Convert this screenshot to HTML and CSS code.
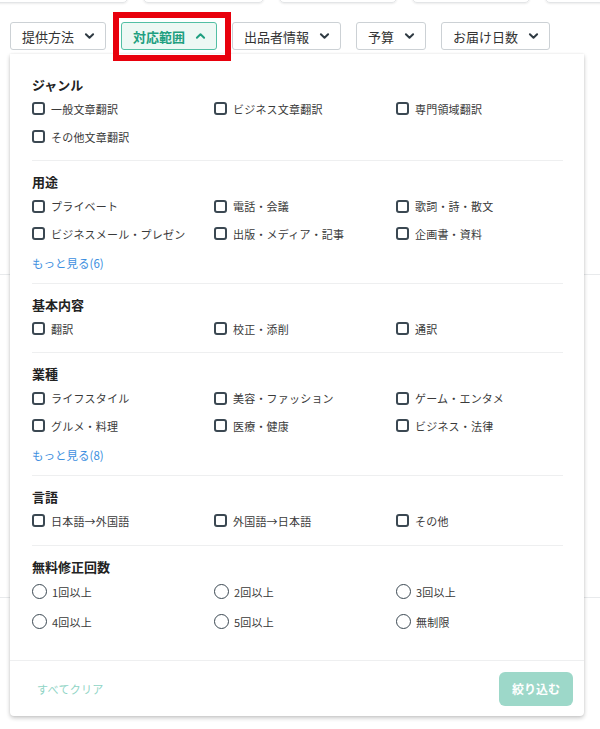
FILE: index.html
```html
<!DOCTYPE html>
<html lang="ja">
<head>
<meta charset="utf-8">
<title>絞り込み</title>
<link rel="stylesheet" href="styles.css">
</head>
<body>
<div class="page">
  <div class="top-cards">
    <div class="tcard w1"></div>
    <div class="tcard w2"></div>
    <div class="tcard w3"></div>
    <div class="tcard w4"></div>
    <div class="tcard w5"></div>
  </div>

  <div class="filter-bar">
    <button class="fbtn"><span>提供方法</span><svg class="chev" viewBox="0 0 10 6"><path d="M1 1l4 4 4-4"/></svg></button>
    <button class="fbtn active"><span>対応範囲</span><svg class="chev" viewBox="0 0 10 6"><path d="M1 5l4-4 4 4"/></svg></button>
    <button class="fbtn"><span>出品者情報</span><svg class="chev" viewBox="0 0 10 6"><path d="M1 1l4 4 4-4"/></svg></button>
    <button class="fbtn"><span>予算</span><svg class="chev" viewBox="0 0 10 6"><path d="M1 1l4 4 4-4"/></svg></button>
    <button class="fbtn"><span>お届け日数</span><svg class="chev" viewBox="0 0 10 6"><path d="M1 1l4 4 4-4"/></svg></button>
  </div>

  <div class="results">
    <div class="result r1"></div>
    <div class="result r2"></div>
    <div class="result r3"><span class="price">¥5,000</span></div>
  </div>

  <div class="highlight"></div>

  <div class="panel">
    <div class="panel-body">
      <section class="sec">
        <h3 class="sec-title">ジャンル</h3>
        <div class="opts">
          <label class="opt"><span class="cb"></span>一般文章翻訳</label>
          <label class="opt"><span class="cb"></span>ビジネス文章翻訳</label>
          <label class="opt"><span class="cb"></span>専門領域翻訳</label>
          <label class="opt"><span class="cb"></span>その他文章翻訳</label>
        </div>
      </section>
      <section class="sec">
        <h3 class="sec-title">用途</h3>
        <div class="opts">
          <label class="opt"><span class="cb"></span>プライベート</label>
          <label class="opt"><span class="cb"></span>電話・会議</label>
          <label class="opt"><span class="cb"></span>歌詞・詩・散文</label>
          <label class="opt"><span class="cb"></span>ビジネスメール・プレゼン</label>
          <label class="opt"><span class="cb"></span>出版・メディア・記事</label>
          <label class="opt"><span class="cb"></span>企画書・資料</label>
        </div>
        <a class="more">もっと見る(6)</a>
      </section>
      <section class="sec">
        <h3 class="sec-title">基本内容</h3>
        <div class="opts">
          <label class="opt"><span class="cb"></span>翻訳</label>
          <label class="opt"><span class="cb"></span>校正・添削</label>
          <label class="opt"><span class="cb"></span>通訳</label>
        </div>
      </section>
      <section class="sec">
        <h3 class="sec-title">業種</h3>
        <div class="opts">
          <label class="opt"><span class="cb"></span>ライフスタイル</label>
          <label class="opt"><span class="cb"></span>美容・ファッション</label>
          <label class="opt"><span class="cb"></span>ゲーム・エンタメ</label>
          <label class="opt"><span class="cb"></span>グルメ・料理</label>
          <label class="opt"><span class="cb"></span>医療・健康</label>
          <label class="opt"><span class="cb"></span>ビジネス・法律</label>
        </div>
        <a class="more">もっと見る(8)</a>
      </section>
      <section class="sec">
        <h3 class="sec-title">言語</h3>
        <div class="opts">
          <label class="opt"><span class="cb"></span>日本語→外国語</label>
          <label class="opt"><span class="cb"></span>外国語→日本語</label>
          <label class="opt"><span class="cb"></span>その他</label>
        </div>
      </section>
      <section class="sec last">
        <h3 class="sec-title">無料修正回数</h3>
        <div class="opts radios">
          <label class="opt"><span class="rb"></span>1回以上</label>
          <label class="opt"><span class="rb"></span>2回以上</label>
          <label class="opt"><span class="rb"></span>3回以上</label>
          <label class="opt"><span class="rb"></span>4回以上</label>
          <label class="opt"><span class="rb"></span>5回以上</label>
          <label class="opt"><span class="rb"></span>無制限</label>
        </div>
      </section>
    </div>
    <div class="panel-foot">
      <a class="clear">すべてクリア</a>
      <button class="apply">絞り込む</button>
    </div>
  </div>
</div>
</body>
</html>
```

FILE: styles.css
```css
* { box-sizing: border-box; }
html, body { margin: 0; padding: 0; background: #fff; }
body {
  font-family: "Noto Sans CJK JP", "Noto Sans", sans-serif;
  color: #333;
  width: 600px;
  height: 729px;
  overflow: hidden;
}
.page { position: relative; width: 600px; height: 729px; overflow: hidden; }

.top-cards {
  display: flex;
  gap: 15px;
  margin-left: -20px;
  margin-top: -7px;
  height: 10px;
}
.tcard {
  height: 10px;
  border: 1px solid #e3e5e7;
  border-radius: 5px;
  box-shadow: 0 1px 2px rgba(0,0,0,0.08);
  flex: none;
}
.w1 { width: 148px; }
.w2 { width: 121px; }
.w3 { width: 118px; }
.w4 { width: 118px; }
.w5 { width: 80px; }

.filter-bar {
  display: flex;
  gap: 15px;
  padding: 0 10px;
  margin-top: 19px;
}
.fbtn {
  display: flex;
  align-items: center;
  gap: 11px;
  height: 28px;
  padding: 0 11px;
  border: 1px solid #ccd1d5;
  border-radius: 3px;
  background: #fff;
  font-family: inherit;
  font-size: 13px;
  color: #333;
  line-height: 1;
}
.chev { width: 9px; height: 6px; fill: none; stroke: #2f3a42; stroke-width: 2.2; stroke-linecap: round; stroke-linejoin: round; overflow: visible; }
.fbtn.active {
  border-color: #52bfa4;
  background: #edf8f4;
  color: #1f9f80;
  font-weight: 700;
}
.fbtn.active .chev { stroke: #1f9f80; }

.results { margin-top: 0; }
.result { border-bottom: 1px solid #e8eaec; }
.r1 { height: 225px; }
.r2 { height: 323px; }
.r3 { height: 140px; padding: 126px 0 0 128px; }
.price { color: #f39b2f; font-size: 14px; font-weight: 700; }

.highlight {
  position: absolute;
  left: 113px;
  top: 12px;
  width: 118px;
  height: 49px;
  border: 6px solid #e8000c;
  z-index: 3;
}

.panel {
  position: absolute;
  left: 10px;
  top: 54px;
  width: 574px;
  background: #fff;
  border-radius: 0 0 4px 4px;
  box-shadow: 0 2px 4px rgba(0,0,0,0.22), 0 0 2px rgba(0,0,0,0.08);
  z-index: 2;
}
.panel-body { padding: 10px 21px 0 22px; }
.sec {
  padding: 12px 0 10px;
  border-bottom: 1px solid #eeeff0;
}
.sec.last { border-bottom: none; padding-bottom: 23px; }
.sec-title {
  margin: 0 0 1px;
  font-size: 13px;
  line-height: 18px;
  font-weight: 700;
  color: #222;
}
.opts {
  display: grid;
  grid-template-columns: 182px 182px 167px;
}
.opt {
  display: flex;
  align-items: center;
  gap: 6px;
  height: 27.7px;
  font-size: 11px;
  letter-spacing: 0.2px;
  color: #3a3a3a;
  white-space: nowrap;
}
.cb {
  width: 13px;
  height: 13px;
  border: 2px solid #3b4852;
  border-radius: 3px;
  flex: none;
}
.radios { margin-top: 1px; }
.radios .opt { height: 30px; gap: 5px; }
.rb {
  width: 15px;
  height: 15px;
  border: 1.7px solid #3b4852;
  border-radius: 50%;
  flex: none;
}
.more {
  display: block;
  margin-top: 5px;
  font-size: 11.5px;
  line-height: 20px;
  color: #3d8fe0;
}

.panel-foot {
  display: flex;
  justify-content: space-between;
  align-items: center;
  border-top: 1px solid #eeeff0;
  padding: 11px 11px 10px 27px;
}
.clear {
  font-size: 11px;
  color: #8fd4c5;
  letter-spacing: 0.3px;
}
.apply {
  width: 74px;
  height: 34px;
  border: none;
  border-radius: 6px;
  background: #9dd8c9;
  color: #fff;
  font-family: inherit;
  font-size: 12px;
  font-weight: 700;
}
```
